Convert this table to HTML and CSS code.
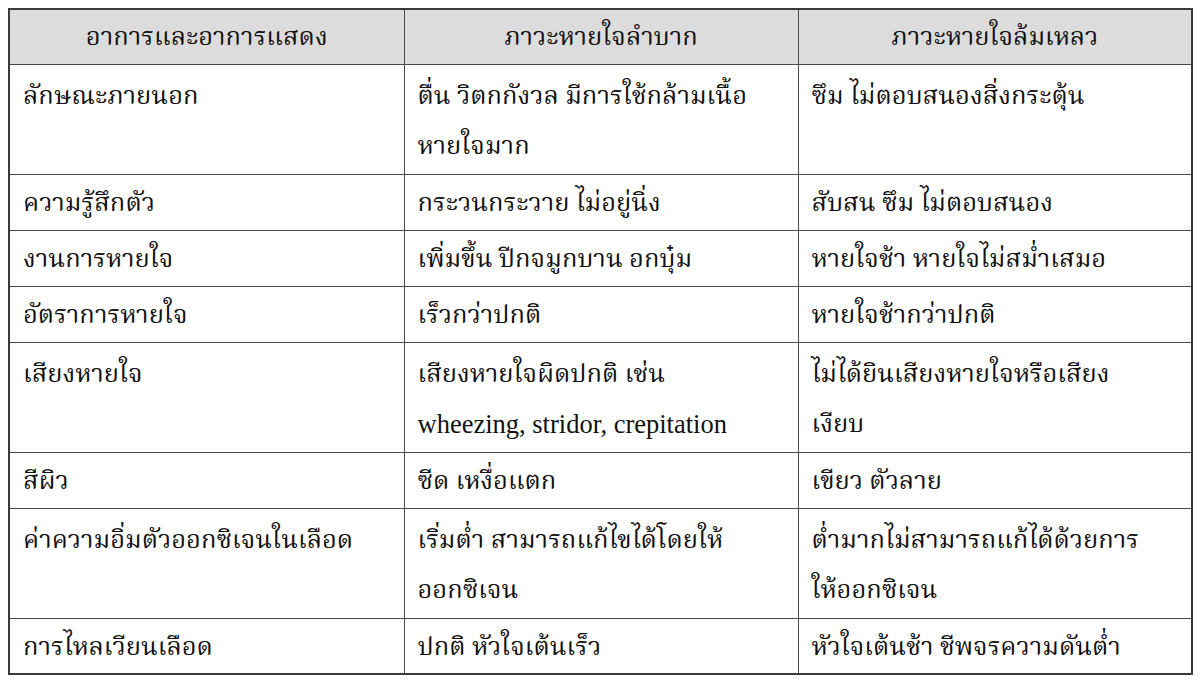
FILE: index.html
```html
<!DOCTYPE html>
<html lang="th">
<head>
<meta charset="utf-8">
<title>อาการและอาการแสดง</title>
<link rel="stylesheet" href="styles.css">
</head>
<body>
<table class="compare">
  <colgroup>
    <col class="c1"><col class="c2"><col class="c3">
  </colgroup>
  <thead>
    <tr>
      <th>อาการและอาการแสดง</th>
      <th>ภาวะหายใจลำบาก</th>
      <th>ภาวะหายใจล้มเหลว</th>
    </tr>
  </thead>
  <tbody>
    <tr class="two">
      <td>ลักษณะภายนอก</td>
      <td>ตื่น วิตกกังวล มีการใช้กล้ามเนื้อ<br>หายใจมาก</td>
      <td>ซึม ไม่ตอบสนองสิ่งกระตุ้น</td>
    </tr>
    <tr>
      <td>ความรู้สึกตัว</td>
      <td>กระวนกระวาย ไม่อยู่นิ่ง</td>
      <td>สับสน ซึม ไม่ตอบสนอง</td>
    </tr>
    <tr>
      <td>งานการหายใจ</td>
      <td>เพิ่มขึ้น ปีกจมูกบาน อกบุ๋ม</td>
      <td>หายใจช้า หายใจไม่สม่ำเสมอ</td>
    </tr>
    <tr>
      <td>อัตราการหายใจ</td>
      <td>เร็วกว่าปกติ</td>
      <td>หายใจช้ากว่าปกติ</td>
    </tr>
    <tr class="two">
      <td>เสียงหายใจ</td>
      <td>เสียงหายใจผิดปกติ เช่น<br><span class="latin">wheezing, stridor, crepitation</span></td>
      <td>ไม่ได้ยินเสียงหายใจหรือเสียง<br>เงียบ</td>
    </tr>
    <tr>
      <td>สีผิว</td>
      <td>ซีด เหงื่อแตก</td>
      <td>เขียว ตัวลาย</td>
    </tr>
    <tr class="two">
      <td>ค่าความอิ่มตัวออกซิเจนในเลือด</td>
      <td>เริ่มต่ำ สามารถแก้ไขได้โดยให้<br>ออกซิเจน</td>
      <td>ต่ำมากไม่สามารถแก้ได้ด้วยการ<br>ให้ออกซิเจน</td>
    </tr>
    <tr>
      <td>การไหลเวียนเลือด</td>
      <td>ปกติ หัวใจเต้นเร็ว</td>
      <td>หัวใจเต้นช้า ชีพจรความดันต่ำ</td>
    </tr>
  </tbody>
</table>
</body>
</html>
```

FILE: styles.css
```css
html, body {
  margin: 0;
  padding: 0;
  background: #ffffff;
}

body {
  padding: 8px;
  font-family: "Liberation Serif", "Noto Serif Thai", "Noto Sans Thai", "Tlwg Typo", serif;
  font-size: 25.5px;
  color: #111111;
}

.compare {
  border-collapse: collapse;
  width: 1183px;
  table-layout: fixed;
  border: 2px solid #3a3a3a;
}

.c1 { width: 395px; }
.c2 { width: 394px; }
.c3 { width: 394px; }

.compare th,
.compare td {
  box-sizing: border-box;
  border: 1px solid #4a4a4a;
  padding: 3px 13px 0;
  height: 56px;
  line-height: 50px;
  vertical-align: top;
  text-align: left;
  white-space: nowrap;
}

.compare th {
  height: 55px;
  padding: 0 13px;
  line-height: 48px;
  background: #dcdcdc;
  font-weight: normal;
  text-align: center;
  vertical-align: middle;
}

.compare tr.two td {
  height: 110px;
  line-height: 50px;
  padding-top: 6px;
}

.latin {
  font-size: 26.5px;
}
```
